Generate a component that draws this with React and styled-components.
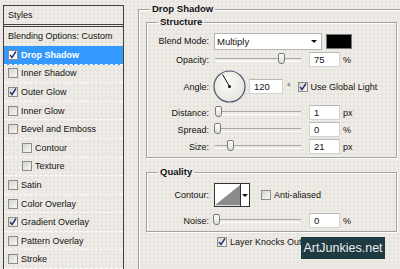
import React from "react";
import styled, { createGlobalStyle } from "styled-components";

const GlobalStyle = createGlobalStyle`
  html, body {
    margin: 0;
    width: 400px;
    height: 269px;
    overflow: hidden;
  }
  body {
    font-family: "Liberation Sans", Arial, sans-serif;
    font-size: 9px;
    color: #121212;
    background-color: #ecebe6;
    background-image: radial-gradient(rgba(222, 170, 160, 0.28) 0.6px, transparent 0.9px);
    background-size: 4px 4px;
  }
`;

const Page = styled.div`
  display: flex;
  height: 269px;
  padding-left: 3px;
  box-sizing: border-box;
  overflow: hidden;
  position: relative;
`;

const StylesPanel = styled.div`
  width: 121px;
  flex-shrink: 0;
  margin-top: 5px;
  box-sizing: border-box;
  border: 1px solid #404040;
  border-bottom: none;
  display: flex;
  flex-direction: column;
`;

const PanelHeader = styled.div`
  height: 18px;
  display: flex;
  align-items: center;
  padding-left: 4px;
  border-bottom: 1px solid #404040;
  margin-bottom: 1px;
`;

const BlendingRow = styled.div`
  height: 20px;
  display: flex;
  align-items: center;
  padding-left: 4px;
  border-top: 1px solid #404040;
`;

const StyleRow = styled.div`
  height: 18px;
  display: flex;
  align-items: center;
  gap: 3px;
  padding-left: ${(p) => (p.$indent ? 18 : 4)}px;
  border-bottom: 1px dashed rgba(255, 255, 255, 0.95);
  background: ${(p) => (p.$active ? "#3399ff" : "transparent")};
  color: ${(p) => (p.$active ? "#fff" : "#121212")};
  font-weight: ${(p) => (p.$active ? "bold" : "normal")};
`;

const Box = styled.span`
  width: 10px;
  height: 10px;
  box-sizing: border-box;
  flex-shrink: 0;
  border: 1px solid #8c8c8c;
  background: ${(p) => (p.$white ? "#fff" : "linear-gradient(135deg, #d6d6d0, #f6f6f3)")};
  display: flex;
  align-items: center;
  justify-content: center;
`;

const Check = ({ on, white }) => (
  <Box $white={white}>
    {on && (
      <svg width="8" height="8" viewBox="0 0 8 8">
        <path d="M1 4 L3 6.5 L7 0.5" fill="none" stroke="#22346e" strokeWidth="1.4" />
      </svg>
    )}
  </Box>
);

const RightArea = styled.div`
  margin-left: 14px;
  margin-top: 4px;
  flex-shrink: 0;
`;

const Group = styled.fieldset`
  margin: ${(p) => p.$mt || 0}px 0 0 0;
  padding: ${(p) => (p.$outer ? "0 0 0 7px" : "0 0 2px 0")};
  width: ${(p) => (p.$outer ? 300 : 251)}px;
  min-height: ${(p) => (p.$outer ? 300 : 0)}px;
  box-sizing: border-box;
  border: 1px solid #a2a2a2;
  box-shadow: inset 1px 1px 0 #fff, 1px 1px 0 #fff;
`;

const Legend = styled.legend`
  margin-left: ${(p) => (p.$outer ? 4 : 11)}px;
  padding: 0 2px;
  font-weight: bold;
  font-size: 9.5px;
  line-height: 10px;
  color: #101018;
`;

const Row = styled.div`
  display: flex;
  align-items: center;
  height: ${(p) => p.$h}px;
  margin-top: ${(p) => p.$mt || 0}px;
`;

const Label = styled.span`
  width: 62px;
  flex-shrink: 0;
  margin-right: 5px;
  text-align: right;
`;

const Select = styled.div`
  width: 108px;
  height: 17px;
  box-sizing: border-box;
  background: #fff;
  border: 1px solid #b4b4b4;
  display: flex;
  align-items: center;
  justify-content: space-between;
  padding: 0 4px 0 2px;
  font-size: 9.5px;
`;

const Arrow = styled.span`
  width: 0;
  height: 0;
  border-left: 3px solid transparent;
  border-right: 3px solid transparent;
  border-top: 3px solid #111;
`;

const Swatch = styled.div`
  width: 26px;
  height: 15px;
  margin-left: 4px;
  box-sizing: border-box;
  background: #000;
  border: 1px solid #777;
`;

const Track = styled.div`
  position: relative;
  width: 86px;
  height: 2px;
  margin-left: 1px;
  border-top: 1px solid #a8a8a8;
  border-bottom: 1px solid #fff;
  flex-shrink: 0;
`;

const Thumb = styled.span`
  position: absolute;
  top: -6px;
  width: 5px;
  height: 9px;
  border: 1px solid #7c7c7c;
  border-radius: 2px 2px 3px 3px;
  background: linear-gradient(#ffffff, #dcdcd8);
`;

const Field = styled.div`
  width: ${(p) => p.$w || 31}px;
  height: 15px;
  margin-left: ${(p) => (p.$ml === undefined ? 8 : p.$ml)}px;
  box-sizing: border-box;
  background: #fff;
  border: 1px solid #d2d2d2;
  border-top-color: #b8b8b8;
  display: flex;
  align-items: center;
  padding-left: 4px;
  font-size: 9.5px;
  flex-shrink: 0;
`;

const Unit = styled.span`
  margin-left: ${(p) => p.$ml || 3}px;
`;

const CheckLabel = styled.label`
  display: flex;
  align-items: center;
  gap: 3px;
  margin-left: ${(p) => p.$ml || 0}px;
`;

const KnockRow = styled.div`
  display: flex;
  align-items: center;
  height: 16px;
  margin-top: 2px;
  padding-left: 71px;
`;

const ContourBox = styled.div`
  display: flex;
  width: 36px;
  height: 24px;
  box-sizing: border-box;
  border: 1px solid #333;
  background: #fff;
`;

const ContourDrop = styled.div`
  width: 8px;
  border-left: 1px solid #333;
  display: flex;
  align-items: center;
  justify-content: center;
`;

const Watermark = styled.div`
  position: absolute;
  left: 301px;
  top: 237px;
  width: 84px;
  height: 22px;
  background: #1f3a40;
  color: #e8f0f0;
  font-size: 12.5px;
  display: flex;
  align-items: center;
  justify-content: center;
`;

const Slider = ({ pos }) => (
  <Track>
    <Thumb style={{ left: pos }} />
  </Track>
);

const Dial = () => (
  <svg width="33" height="33" viewBox="0 0 33 33" style={{ flexShrink: 0, marginLeft: -1 }}>
    <defs>
      <radialGradient id="dialFill" cx="0.45" cy="0.4" r="0.6">
        <stop offset="0" stopColor="#fbfbf8" />
        <stop offset="1" stopColor="#e6e6e0" />
      </radialGradient>
    </defs>
    <circle cx="16.5" cy="16.5" r="15.5" fill="url(#dialFill)" stroke="#4c5670" strokeWidth="1.2" />
    <line x1="16.5" y1="16.5" x2="9.5" y2="4.4" stroke="#111" strokeWidth="1" />
    <circle cx="16.5" cy="16.5" r="1.5" fill="#111" />
  </svg>
);

const styleItems = [
  { name: "Drop Shadow", on: true, active: true },
  { name: "Inner Shadow" },
  { name: "Outer Glow", on: true },
  { name: "Inner Glow" },
  { name: "Bevel and Emboss" },
  { name: "Contour", indent: true },
  { name: "Texture", indent: true },
  { name: "Satin" },
  { name: "Color Overlay" },
  { name: "Gradient Overlay", on: true },
  { name: "Pattern Overlay" },
  { name: "Stroke" },
];

const App = () => (
  <Page>
    <GlobalStyle />
    <StylesPanel>
      <PanelHeader>Styles</PanelHeader>
      <BlendingRow>Blending Options: Custom</BlendingRow>
      {styleItems.map((item) => (
        <StyleRow key={item.name} $active={item.active} $indent={item.indent}>
          <Check on={item.on} white={item.active} />
          {item.name}
        </StyleRow>
      ))}
    </StylesPanel>

    <RightArea>
      <Group $outer>
        <Legend $outer>Drop Shadow</Legend>
        <Group $mt={3}>
          <Legend>Structure</Legend>
          <Row $h={18} $mt={5}>
            <Label>Blend Mode:</Label>
            <Select>
              Multiply
              <Arrow />
            </Select>
            <Swatch />
          </Row>
          <Row $h={19}>
            <Label>Opacity:</Label>
            <Slider pos={63} />
            <Field>75</Field>
            <Unit>%</Unit>
          </Row>
          <Row $h={35}>
            <Label>Angle:</Label>
            <Dial />
            <Field $w={34} $ml={3}>120</Field>
            <Unit $ml={4}>°</Unit>
            <CheckLabel $ml={7}>
              <Check on />
              Use Global Light
            </CheckLabel>
          </Row>
          <Row $h={17}>
            <Label>Distance:</Label>
            <Slider pos={0} />
            <Field>1</Field>
            <Unit>px</Unit>
          </Row>
          <Row $h={17}>
            <Label>Spread:</Label>
            <Slider pos={-1} />
            <Field>0</Field>
            <Unit>%</Unit>
          </Row>
          <Row $h={17}>
            <Label>Size:</Label>
            <Slider pos={12} />
            <Field>21</Field>
            <Unit>px</Unit>
          </Row>
        </Group>

        <Group $mt={9}>
          <Legend>Quality</Legend>
          <Row $h={26} $mt={5}>
            <Label>Contour:</Label>
            <ContourBox>
              <svg width="27" height="22" viewBox="0 0 27 22">
                <polygon points="0,22 27,0 27,22" fill="#8c8c8c" />
              </svg>
              <ContourDrop>
                <Arrow />
              </ContourDrop>
            </ContourBox>
            <CheckLabel $ml={11}>
              <Check />
              Anti-aliased
            </CheckLabel>
          </Row>
          <Row $h={17} $mt={4}>
            <Label>Noise:</Label>
            <Slider pos={-2} />
            <Field>0</Field>
            <Unit>%</Unit>
          </Row>
        </Group>

        <KnockRow>
          <CheckLabel>
            <Check on />
            Layer Knocks Out
          </CheckLabel>
        </KnockRow>
      </Group>
    </RightArea>

    <Watermark>ArtJunkies.net</Watermark>
  </Page>
);

export default App;
